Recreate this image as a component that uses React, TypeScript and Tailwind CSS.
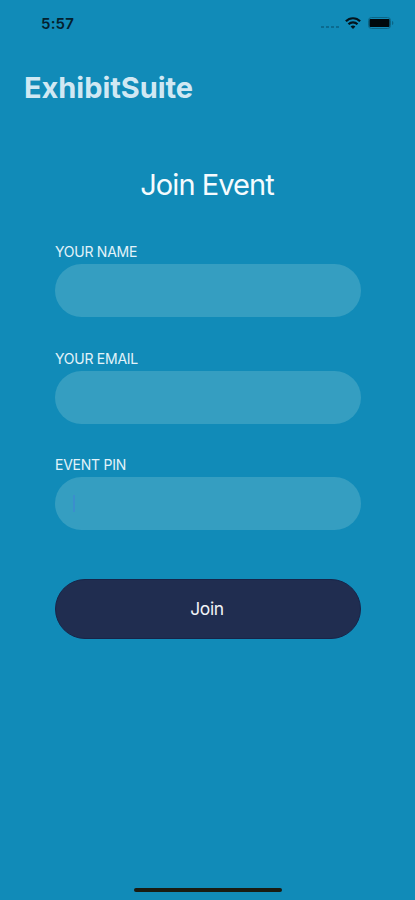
import { useState } from "react";

const fields = [
  { id: "name", label: "YOUR NAME" },
  { id: "email", label: "YOUR EMAIL" },
  { id: "pin", label: "EVENT PIN" },
] as const;

type FieldProps = (typeof fields)[number] & {
  value: string;
  onChange: (value: string) => void;
};

function StatusBar() {
  return (
    <div className="flex h-[46px] items-center justify-between pl-[41px] pr-[21px] text-[#04212f]">
      <span className="text-[15px] font-semibold leading-none tracking-[0.2px]">
        5:57
      </span>
      <div className="flex items-center">
        <div className="mt-[7px] mr-[6px] flex gap-[2px]">
          <span className="h-[2px] w-[3px] bg-[#0b6b90]" />
          <span className="h-[2px] w-[3px] bg-[#0b6b90]" />
          <span className="h-[2px] w-[3px] bg-[#0b6b90]" />
          <span className="h-[2px] w-[3px] bg-[#0b6b90]" />
        </div>
        <svg
          className="mr-[7px] h-[12px] w-[16px]"
          viewBox="0 0 16 12"
          fill="none"
          stroke="#04141c"
          strokeWidth="2.2"
        >
          <path d="M0.9 4.3C4.8 0.2 11.2 0.2 15.1 4.3" />
          <path d="M3.5 7.2C6 4.7 10 4.7 12.5 7.2" />
          <path d="M8 12L5.6 9.4C7 8.1 9 8.1 10.4 9.4Z" fill="#04141c" stroke="none" />
        </svg>
        <svg className="h-[12px] w-[26px]" viewBox="0 0 26 12" fill="none">
          <rect x="0.5" y="0.5" width="22" height="11" rx="3" stroke="#0b6687" />
          <rect x="1.5" y="2" width="20" height="8" rx="1" fill="#00080c" />
          <path d="M24 4V8C25.8 7.5 25.8 4.5 24 4Z" fill="#0b6687" />
        </svg>
      </div>
    </div>
  );
}

function Field({ id, label, value, onChange }: FieldProps) {
  return (
    <div className="flex flex-col">
      <label
        htmlFor={id}
        className="mb-[4px] h-[17px] text-[14px] leading-[17px] tracking-[-0.25px] text-[#e2f3fa]"
      >
        {label}
      </label>
      <div className="flex h-[53px] items-center rounded-[27px] bg-[#359ec1] px-[18px]">
        {id === "pin" && <span className="h-[17px] w-[2px] bg-[#3b8fcd]" />}
        <input
          id={id}
          value={value}
          onChange={(e) => onChange(e.target.value)}
          className="w-full min-w-0 bg-transparent text-white caret-[#3b8fcd] outline-none"
        />
      </div>
    </div>
  );
}

export default function App() {
  const [values, setValues] = useState({ name: "", email: "", pin: "" });

  return (
    <main className="flex h-[900px] w-[415px] flex-col overflow-hidden bg-[#118bb8] font-['Inter','Liberation_Sans',sans-serif]">
      <StatusBar />
      <header className="flex h-[82px] items-center pl-[24px]">
        <span className="text-[29px] font-bold leading-none tracking-[-0.05px] text-[#d0e8f3]">
          ExhibitSuite
        </span>
      </header>
      <section className="flex flex-1 flex-col pl-[55px] pr-[54px] pt-[39px]">
        <h1 className="h-[36px] pr-[2px] text-center text-[29px] leading-[36px] tracking-[-0.95px] text-[#f5fbfe]">
          Join Event
        </h1>
        <form className="mt-[40px] flex flex-col" onSubmit={(e) => e.preventDefault()}>
          <div className="flex flex-col gap-[32.5px]">
            {fields.map((field) => (
              <Field
                key={field.id}
                {...field}
                value={values[field.id]}
                onChange={(value) => setValues({ ...values, [field.id]: value })}
              />
            ))}
          </div>
          <button className="mt-[49px] h-[60px] rounded-full border border-[#172449] bg-[#202d50] pr-[2px] text-[17.5px] tracking-[-0.4px] text-[#f0f2f6]">
            Join
          </button>
        </form>
      </section>
      <div className="mb-[8px] h-[4px] w-[148px] self-center rounded-full bg-[#1a1b12]" />
    </main>
  );
}
